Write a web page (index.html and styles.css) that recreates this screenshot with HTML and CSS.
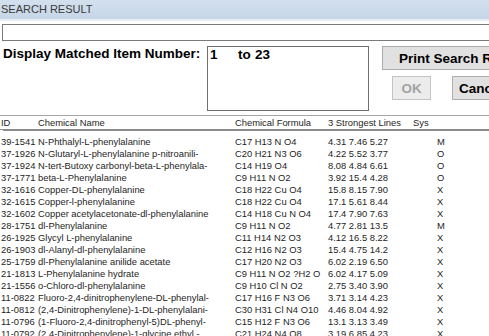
FILE: index.html
```html
<!DOCTYPE html>
<html lang="en">
<head>
    <meta charset="UTF-8">
    <title>Search Result</title>
    <link rel="stylesheet" href="styles.css">
</head>
<body>
    <div class="titlebar">SEARCH RESULT</div>

    <div class="dialog">
        <input type="text" class="query" value="">

        <div class="controls">
            <div class="match-label">Display Matched Item Number:</div>
            <div class="match-box"><span class="from">1</span><span class="to">to</span><span>23</span></div>
            <div class="buttons">
                <button class="btn print-btn">Print Search Result</button>
                <div class="btn-row">
                    <button class="btn ok-btn" disabled>OK</button>
                    <button class="btn cancel-btn">Cancel</button>
                </div>
            </div>
        </div>

        <table class="results">
            <colgroup>
                <col class="c-id"><col class="c-name"><col class="c-formula"><col class="c-lines"><col class="c-sys">
            </colgroup>
            <thead>
                <tr><th>ID</th><th>Chemical Name</th><th>Chemical Formula</th><th>3 Strongest Lines</th><th>Sys</th></tr>
            </thead>
            <tbody>
                <tr><td>39-1541</td><td>N-Phthalyl-L-phenylalanine</td><td>C17 H13 N O4</td><td>4.31 7.46 5.27</td><td class="sys">M</td></tr>
                <tr><td>37-1926</td><td>N-Glutaryl-L-phenylalanine p-nitroanili-</td><td>C20 H21 N3 O6</td><td>4.22 5.52 3.77</td><td class="sys">O</td></tr>
                <tr><td>37-1924</td><td>N-tert-Butoxy carbonyl-beta-L-phenylala-</td><td>C14 H19 O4</td><td>8.08 4.84 6.61</td><td class="sys">O</td></tr>
                <tr><td>37-1771</td><td>beta-L-Phenylalanine</td><td>C9 H11 N O2</td><td>3.92 15.4 4.28</td><td class="sys">O</td></tr>
                <tr><td>32-1616</td><td>Copper-DL-phenylalanine</td><td>C18 H22 Cu O4</td><td>15.8 8.15 7.90</td><td class="sys">X</td></tr>
                <tr><td>32-1615</td><td>Copper-l-phenylalanine</td><td>C18 H22 Cu O4</td><td>17.1 5.61 8.44</td><td class="sys">X</td></tr>
                <tr><td>32-1602</td><td>Copper acetylacetonate-dl-phenylalanine</td><td>C14 H18 Cu N O4</td><td>17.4 7.90 7.63</td><td class="sys">X</td></tr>
                <tr><td>28-1751</td><td>dl-Phenylalanine</td><td>C9 H11 N O2</td><td>4.77 2.81 13.5</td><td class="sys">M</td></tr>
                <tr><td>26-1925</td><td>Glycyl L-phenylalanine</td><td>C11 H14 N2 O3</td><td>4.12 16.5 8.22</td><td class="sys">X</td></tr>
                <tr><td>26-1903</td><td>dl-Alanyl-dl-phenylalanine</td><td>C12 H16 N2 O3</td><td>15.4 4.75 14.2</td><td class="sys">X</td></tr>
                <tr><td>25-1759</td><td>dl-Phenylalanine anilide acetate</td><td>C17 H20 N2 O3</td><td>6.02 2.19 6.50</td><td class="sys">X</td></tr>
                <tr><td>21-1813</td><td>L-Phenylalanine hydrate</td><td>C9 H11 N O2 ?H2 O</td><td>6.02 4.17 5.09</td><td class="sys">X</td></tr>
                <tr><td>21-1556</td><td>o-Chloro-dl-phenylalanine</td><td>C9 H10 Cl N O2</td><td>2.75 3.40 3.90</td><td class="sys">X</td></tr>
                <tr><td>11-0822</td><td>Fluoro-2,4-dinitrophenylene-DL-phenylal-</td><td>C17 H16 F N3 O6</td><td>3.71 3.14 4.23</td><td class="sys">X</td></tr>
                <tr><td>11-0812</td><td>(2,4-Dinitrophenylene)-1-DL-phenylalani-</td><td>C30 H31 Cl N4 O10</td><td>4.46 8.04 4.92</td><td class="sys">X</td></tr>
                <tr><td>11-0796</td><td>(1-Fluoro-2,4-dinitrophenyl-5)DL-phenyl-</td><td>C15 H12 F N3 O6</td><td>13.1 3.13 3.49</td><td class="sys">X</td></tr>
                <tr><td>11-0792</td><td>(2,4-Dinitrophenylene)-1-glycine ethyl -</td><td>C21 H24 N4 O8</td><td>3.19 6.85 4.23</td><td class="sys">X</td></tr>
            </tbody>
        </table>
    </div>
</body>
</html>
```

FILE: styles.css
```css
body {
    margin: 0;
    width: 489px;
    height: 336px;
    overflow: hidden;
    background: #fff;
    font-family: "Liberation Sans", Arial, sans-serif;
}
.titlebar {
    height: 19px;
    line-height: 19px;
    padding-left: 1px;
    font-size: 11px;
    color: #3a3a3a;
    background: linear-gradient(#d3e0ed, #c6d6e7);
    border-bottom: 2px solid #e4ecf4;
    white-space: nowrap;
}
.dialog {
    width: 600px;
}
.query {
    display: block;
    margin: 3px 0 0 2px;
    width: 560px;
    height: 17px;
    box-sizing: border-box;
    border: 1px solid #7a7a7a;
    padding: 0;
}
.controls {
    display: flex;
    align-items: flex-start;
    margin-top: 5px;
}
.match-label {
    width: 207px;
    padding-left: 3px;
    box-sizing: border-box;
    font-size: 13.5px;
    font-weight: bold;
    line-height: 16px;
    white-space: nowrap;
}
.match-box {
    width: 162px;
    height: 65px;
    box-sizing: border-box;
    border: 1px solid #6e6e6e;
    padding-left: 2px;
    font-size: 13.5px;
    font-weight: bold;
    line-height: 16px;
}
.match-box .from {
    display: inline-block;
    width: 28px;
}
.match-box .to {
    display: inline-block;
    width: 17px;
}
.buttons {
    margin-left: 13px;
}
.btn {
    display: block;
    height: 24px;
    box-sizing: border-box;
    border: 1px solid #adadad;
    background: #e1e1e1;
    font-family: "Liberation Sans", Arial, sans-serif;
    font-size: 13.5px;
    font-weight: bold;
    color: #000;
    padding: 0;
}
.print-btn {
    width: 160px;
    text-align: left;
    padding-left: 16px;
}
.btn-row {
    display: flex;
    gap: 21px;
    margin: 6px 0 0 10px;
}
.ok-btn {
    width: 39px;
    color: #a3a3a3;
    background: #ececec;
    border-color: #c4c4c4;
}
.cancel-btn {
    width: 60px;
    text-align: left;
    padding-left: 6px;
}
.results {
    margin-top: 4px;
    border-collapse: collapse;
    table-layout: fixed;
    width: 520px;
    font-size: 9.4px;
    color: #1e1e1e;
}
.c-id { width: 38px; }
.c-name { width: 197px; }
.c-formula { width: 93px; }
.c-lines { width: 85px; }
.c-sys { width: 107px; }
.results th {
    font-weight: normal;
    text-align: left;
    height: 13px;
    line-height: 13px;
    padding: 0;
    border-top: 1px solid #a5a5a5;
    border-bottom: 1px solid #8c8c8c;
    white-space: nowrap;
}
.results th:first-child, .results td:first-child {
    padding-left: 1px;
}
.results thead tr {
    box-shadow: 0 4px 0 -3px #8c8c8c;
}
.results tbody tr:first-child td {
    padding-top: 6px;
}
.results td {
    padding: 0;
    height: 12px;
    line-height: 12px;
    white-space: nowrap;
    overflow: hidden;
}
.results td.sys {
    padding-left: 24px;
}
```
